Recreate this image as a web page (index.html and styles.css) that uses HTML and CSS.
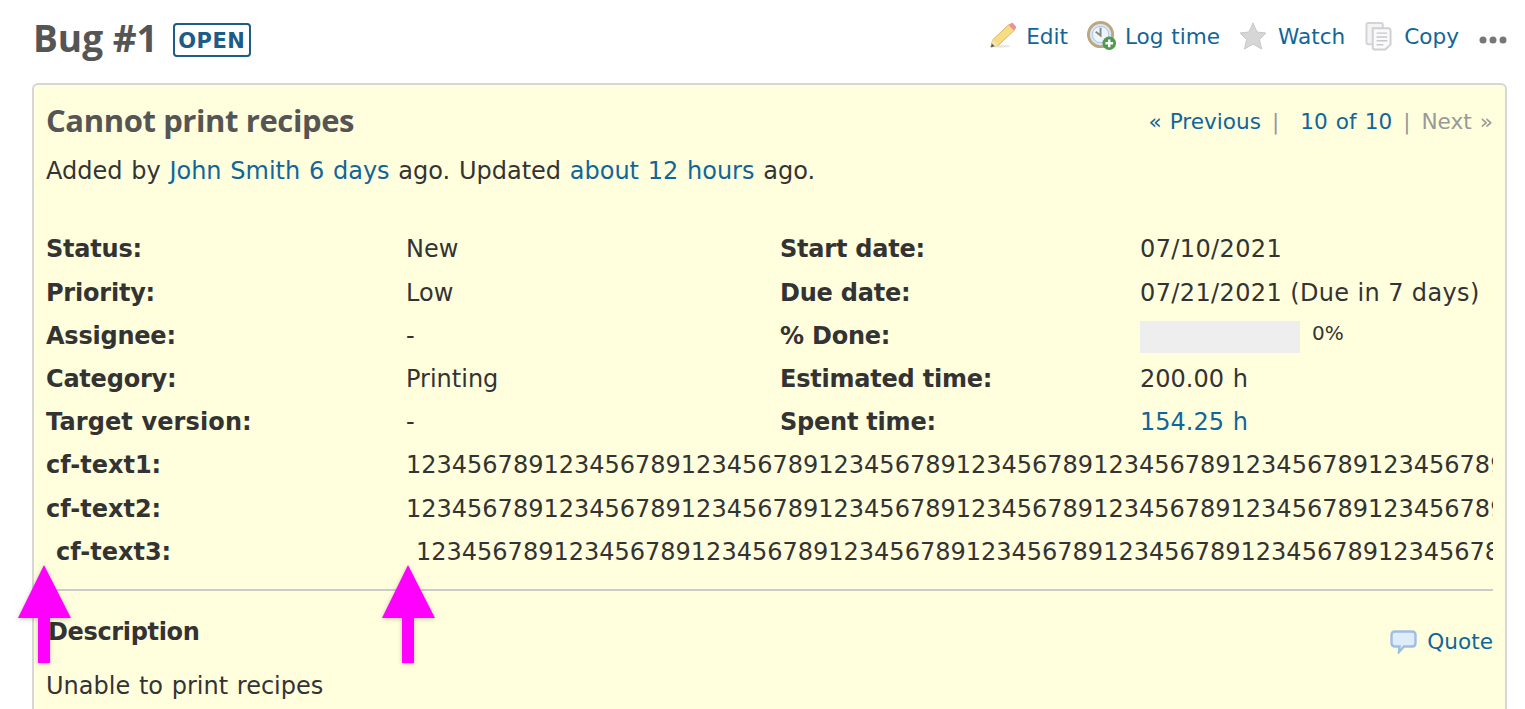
FILE: index.html
```html
<!DOCTYPE html>
<html lang="en">
<head>
<meta charset="utf-8">
<title>Bug #1</title>
<link rel="stylesheet" href="styles.css">
</head>
<body>
<header class="page-head">
  <div class="title-wrap">
    <h2 class="page-title">Bug #1</h2>
    <span class="badge">OPEN</span>
  </div>
  <nav class="actions">
    <a class="action a-edit" href="#">
      <svg class="ic" width="28" height="30" viewBox="0 0 30 30"><ellipse cx="12" cy="26" rx="11" ry="1.5" fill="#e8e8e0"/><path d="M2 27 L4 19 L21 3 L27 9 L10 25 Z" fill="#f6dc82" stroke="#d9b65c"/><path d="M2 27 L4 19 L10 25 Z" fill="#f3e2b8"/><path d="M2 27 L3 23 L6 26 Z" fill="#555"/><path d="M21 3 L24 1 Q25 0.5 26 1.5 L29 5 Q29.5 6 28.6 7 L27 9 Z" fill="#ef8f96"/></svg>
      <span>Edit</span>
    </a>
    <a class="action a-log" href="#">
      <svg class="ic" width="30" height="30" viewBox="0 0 31 31"><circle cx="14" cy="14" r="12.5" fill="#d9e6f5" stroke="#bda77c" stroke-width="3"/><circle cx="14" cy="14" r="8.5" fill="#eef4fb" stroke="#a9c3e2"/><path d="M14 7 L14 15 L9 11" fill="none" stroke="#888" stroke-width="2"/><circle cx="23" cy="23" r="7" fill="#4e9a4e"/><path d="M23 19 V27 M19 23 H27" stroke="#fff" stroke-width="2.4"/></svg>
      <span>Log time</span>
    </a>
    <a class="action a-watch" href="#">
      <svg class="ic" width="28" height="28" viewBox="0 0 28 28"><path d="M14 1 L18 10 L27 11 L20.500 17.500 L22.500 27 L14 22 L5.500 27 L7.500 17.500 L1 11 L10 10 Z" fill="#d6d6d6" stroke="#c8c8c8"/></svg>
      <span>Watch</span>
    </a>
    <a class="action a-copy" href="#">
      <svg class="ic" width="27" height="30" viewBox="0 0 28 30"><rect x="1.500" y="1.500" width="17" height="22" rx="2" fill="#f4f4f4" stroke="#d4d4d8" stroke-width="2"/><path d="M8 7 H24 Q26.500 7 26.500 9.500 V24 L21 29 H10 Q8 29 8 27 Z" fill="#fafafa" stroke="#cfcfd4" stroke-width="2"/><path d="M12 12 H23 M12 16 H23 M12 20 H23 M12 24 H19" stroke="#c8c8cc" stroke-width="1.500"/></svg>
      <span>Copy</span>
    </a>
    <a class="more" href="#" aria-label="More">
      <svg width="28" height="8" viewBox="0 0 28 8"><circle cx="4" cy="4" r="3.500" fill="#777"/><circle cx="14" cy="4" r="3.500" fill="#777"/><circle cx="24" cy="4" r="3.500" fill="#777"/></svg>
    </a>
  </nav>
</header>

<main class="issue">
  <div class="subject-row">
    <h3 class="subject">Cannot print recipes</h3>
    <div class="prev-next">
      <a href="#">« Previous</a><span class="sep">|</span><a class="pos" href="#">10 of 10</a><span class="sep sep-b">|</span><span class="next">Next »</span>
    </div>
  </div>
  <p class="author">Added by <a href="#">John Smith</a> <a href="#">6 days</a> ago. Updated <a href="#">about 12 hours</a> ago.</p>

  <div class="attrs">
    <div class="row"><div class="pair"><span class="lbl">Status:</span><span class="val">New</span></div><div class="pair"><span class="lbl">Start date:</span><span class="val date">07/10/2021</span></div></div>
    <div class="row"><div class="pair"><span class="lbl">Priority:</span><span class="val">Low</span></div><div class="pair"><span class="lbl">Due date:</span><span class="val date">07/21/2021 (Due in 7 days)</span></div></div>
    <div class="row"><div class="pair"><span class="lbl">Assignee:</span><span class="val">-</span></div><div class="pair"><span class="lbl">% Done:</span><span class="val done"><span class="bar"></span><span class="pct">0%</span></span></div></div>
    <div class="row"><div class="pair"><span class="lbl">Category:</span><span class="val">Printing</span></div><div class="pair"><span class="lbl">Estimated time:</span><span class="val">200.00 h</span></div></div>
    <div class="row"><div class="pair"><span class="lbl lbl-wide">Target version:</span><span class="val">-</span></div><div class="pair"><span class="lbl">Spent time:</span><span class="val"><a href="#">154.25 h</a></span></div></div>
    <div class="cf"><span class="lbl lbl-cf">cf-text1:</span><span class="val nowrap">12345678912345678912345678912345678912345678912345678912345678912345678912345678912345678912345678912345678912345678</span></div>
    <div class="cf"><span class="lbl lbl-cf">cf-text2:</span><span class="val nowrap">12345678912345678912345678912345678912345678912345678912345678912345678912345678912345678912345678912345678912345678</span></div>
    <div class="cf cf-indent"><span class="lbl lbl-cf">cf-text3:</span><span class="val nowrap">12345678912345678912345678912345678912345678912345678912345678912345678912345678912345678912345678912345678912345678</span></div>
  </div>

  <hr class="rule">

  <div class="desc-head">
    <h4 class="desc-title">Description</h4>
    <a class="quote" href="#">
      <svg class="ic" width="27" height="24" viewBox="0 0 27 24"><path d="M5 1.500 H22 Q25.500 1.500 25.500 5 V13 Q25.500 16.500 22 16.500 H14 L9 22 L9.500 16.500 H5 Q1.500 16.500 1.500 13 V5 Q1.500 1.500 5 1.500 Z" fill="#dfecfb" stroke="#9dbfe4" stroke-width="2.4"/></svg>
      <span>Quote</span>
    </a>
  </div>
  <p class="desc">Unable to print recipes</p>
</main>

<svg class="arrow arrow-l" width="56" height="102" viewBox="0 0 56 102"><path d="M27 1 L54 54 H33 V99 H21 V54 H1 Z" fill="#ff00ff"/></svg>
<svg class="arrow arrow-r" width="56" height="102" viewBox="0 0 56 102"><path d="M27 1 L54 54 H33 V99 H21 V54 H1 Z" fill="#ff00ff"/></svg>
</body>
</html>
```

FILE: styles.css
```css
* { box-sizing: border-box; }
html, body { margin: 0; height: 709px; overflow: hidden; background: #fff; }
body {
  position: relative;
  padding: 0 18px 0 32px;
  font-family: "DejaVu Sans", Verdana, sans-serif;
  font-size: 24px;
  word-spacing: 1.1px;
  color: #333;
}
a { color: #169; text-decoration: none; }
.page-head {
  height: 83px;
  display: flex;
  justify-content: space-between;
  align-items: flex-start;
}
.title-wrap { display: flex; align-items: center; padding-top: 16px; }
.page-title {
  margin: 0 0 0 1px;
  font-family: "Open Sans", sans-serif;
  font-size: 37px;
  line-height: 44px;
  font-weight: 700;
  color: #555;
  word-spacing: 0;
}
.badge {
  margin: 4px 0 0 15px;
  height: 34px;
  width: 78px;
  border: 2px solid #1c5c88;
  border-radius: 4px;
  color: #1c5c88;
  font-size: 21px;
  font-weight: 700;
  line-height: 32px;
  text-align: center;
  letter-spacing: .4px;
}
.actions { display: flex; align-items: center; padding-top: 21px; height: 51px; font-size: 21.6px; word-spacing: .8px; }
.action { display: flex; align-items: center; }
.ic { flex: none; }
.a-edit { margin-right: 19px; }
.a-edit .ic { margin-right: 9px; }
.a-log { margin-right: 19px; }
.a-log .ic { margin-right: 8px; }
.a-watch { margin-right: 20px; }
.a-watch .ic { margin-right: 11px; }
.a-copy { margin-right: 20px; }
.a-copy .ic { margin-right: 12px; }
.more { display: flex; padding-top: 8px; }

.issue {
  height: 700px;
  border: 2px solid #d7d7d7;
  border-radius: 6px;
  background: #ffd;
  padding: 12px 12px 0 12px;
}
.subject-row { display: flex; justify-content: space-between; align-items: center; height: 46px; }
.subject {
  margin: 0;
  font-family: "Open Sans", sans-serif;
  font-size: 31px;
  font-weight: 700;
  color: #555;
  letter-spacing: -.4px;
  word-spacing: 0;
}
.prev-next { font-size: 21.6px; white-space: nowrap; margin-top: 3px; word-spacing: 1.2px; }
.sep { color: #999; margin: 0 21px 0 11px; }
.sep-b { margin: 0 11px; }
.next { color: #999; }
.author { margin: 7px 0 0; line-height: 42px; height: 42px; }
.attrs { margin-top: 36.4px; }
.row { display: grid; grid-template-columns: 734px 1fr; height: 43.2px; line-height: 43.2px; }
.pair { display: grid; grid-template-columns: 360px 1fr; white-space: nowrap; }
.lbl { font-weight: 700; letter-spacing: -.22px; word-spacing: 0; }
.lbl-wide { letter-spacing: .12px; }
.lbl-cf { letter-spacing: 0; }
.date { letter-spacing: .38px; word-spacing: 0; }
.cf { display: grid; grid-template-columns: 360px 1fr; height: 43.2px; line-height: 43.2px; }
.cf-indent { padding-left: 10px; }
.nowrap { white-space: nowrap; overflow: hidden; }
.done { display: flex; align-items: flex-start; }
.bar { width: 160px; height: 32px; background: #eee; margin-top: 6px; }
.pct { font-size: 20px; line-height: 36px; margin-left: 12px; }
.rule { margin: 15px 0 0; border: 0; height: 2px; background: #ccc; }
.desc-head { display: flex; justify-content: space-between; align-items: flex-start; padding-top: 23px; }
.desc-title { margin: 0 0 0 2px; font-size: 24px; font-weight: 700; line-height: 36px; letter-spacing: -.35px; }
.quote { display: flex; align-items: center; margin-top: 11px; height: 34px; font-size: 21.6px; }
.quote .ic { margin-right: 10px; }
.desc { margin: 6px 0 0; line-height: 42px; }

.arrow { position: absolute; top: 564px; filter: drop-shadow(0 1px 2px rgba(0,0,0,.25)); }
.arrow-l { left: 17px; }
.arrow-r { left: 381px; }
```
